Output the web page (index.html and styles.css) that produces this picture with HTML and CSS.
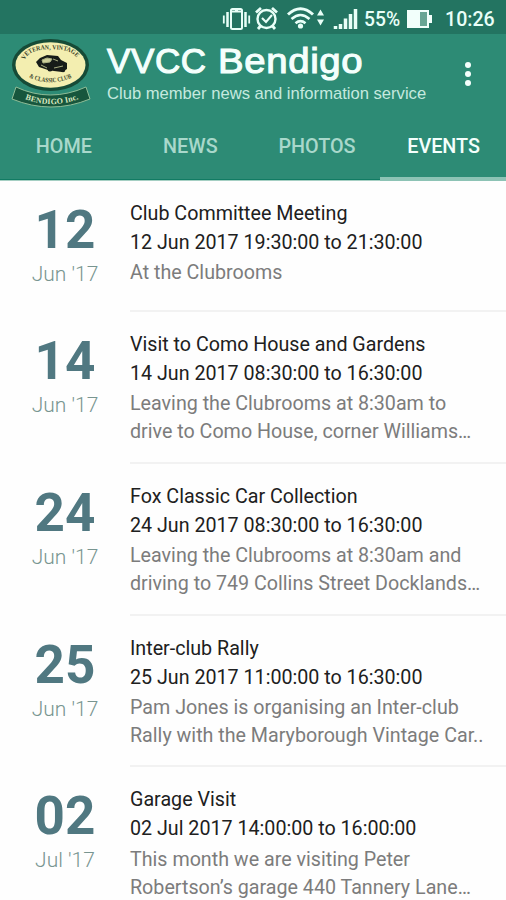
FILE: index.html
```html
<!DOCTYPE html>
<html lang="en">
<head>
<meta charset="utf-8">
<title>VVCC Bendigo</title>
<link rel="stylesheet" href="styles.css">
</head>
<body>
<header class="app-header">
  <div class="status-bar">
    <svg class="status-icons" width="144" height="34" viewBox="215 0 144 34" fill="none" stroke="#e9fff8">
      <rect x="231" y="9" width="11" height="20" rx="1.5" stroke-width="2"/>
      <path d="M232 11.5h9M235 10h3" stroke-width="2"/>
      <path d="M227.500 12v15M245.500 12v15" stroke-width="2.500"/>
      <path d="M223.800 15.500v8M249.200 15.500v8" stroke-width="1.800"/>
      <circle cx="266.500" cy="19" r="9" stroke-width="2.400"/>
      <path d="M256 12.500l5-4.500M277 12.500l-5-4.500M260.500 26l-2.500 3M272.500 26l2.500 3" stroke-width="2.800"/>
      <path d="M262 18l4 4 6-7" stroke-width="2.100"/>
      <path d="M288 14.500q12.500-11.500 25 0" stroke-width="3"/>
      <path d="M291.500 19q9-8 18 0M295.500 23.200q5-4.200 10 0" stroke-width="2.600"/>
      <circle cx="300.500" cy="26" r="2.600" fill="#e9fff8" stroke="none"/>
      <path d="M317 15.500l3.500-6 3.500 6zM317 19.500l3.500 6 3.500-6z" fill="#e9fff8" stroke="none"/>
      <path d="M335.500 29v-3M340.500 29v-5" stroke-width="3.500"/>
      <path d="M345.500 29V18.500M350.500 29V14M355.500 29V9" stroke-width="3.500"/>
    </svg>
    <span class="battery-level">55%</span>
    <svg class="battery" width="28" height="18" viewBox="0 0 28 18">
      <path d="M1 0h22v5h3v8h-3v5H1z" fill="#f2fffb"/>
      <path d="M14 2h7v14h-7z" fill="#68a594"/>
    </svg>
    <span class="clock">10:26</span>
  </div>
  <div class="title-bar">
    <svg class="logo" width="84" height="70" viewBox="9 38 84 70">
      <path d="M16 87Q50 103 86 87L90 99Q51 115 12 99z" fill="#17563d" stroke="#8fbd97" stroke-width="1"/>
      <ellipse cx="50.500" cy="65" rx="38.500" ry="26" fill="#164b37"/>
      <ellipse cx="50.500" cy="65" rx="35" ry="22.800" fill="#f3eeb0"/>
      <path id="arc-top" d="M24.500 60Q30 48.500 51 49.500Q72 48.500 78 60" fill="none"/>
      <path id="arc-mid" d="M29 77.500Q50 87 72 77.500" fill="none"/>
      <path id="arc-base" d="M25 99Q51 109.500 80 98.500" fill="none"/>
      <text class="logo-dark"><textPath href="#arc-top" textLength="58" lengthAdjust="spacingAndGlyphs">VETERAN, VINTAGE</textPath></text>
      <text class="logo-dark"><textPath href="#arc-mid" textLength="44" lengthAdjust="spacingAndGlyphs">&amp; CLASSIC CLUB</textPath></text>
      <text class="logo-light"><textPath href="#arc-base" textLength="55">BENDIGO Inc.</textPath></text>
      <path d="M36 62l4-4 7-3 11 1 3 4 6 3v6l-5 3-8-1-6-1-9-3z" fill="#171c18"/>
      <path d="M42 60l5-2 5 1-2 3-7 1zM53 59l5 2M54 68l9-2M41 65l6 3" fill="#cdcf9b" stroke="#aab083" stroke-width="1"/>
      <circle cx="50" cy="69" r="2.500" fill="#171c18"/><circle cx="63" cy="70" r="2.300" fill="#171c18"/>
    </svg>
    <div class="brand">
      <div class="brand-name">VVCC <span class="brand-town">Bendigo</span></div>
      <div class="brand-tagline">Club member news and information service</div>
    </div>
    <div class="menu"><i></i><i></i><i></i></div>
  </div>
  <nav class="tabs">
    <a class="tab">HOME</a><a class="tab">NEWS</a><a class="tab">PHOTOS</a><a class="tab tab-active">EVENTS</a>
  </nav>
</header>
<main>
  <article class="event event-short">
    <div class="date"><div class="day">12</div><div class="month">Jun '17</div></div>
    <div class="details"><div class="name">Club Committee Meeting</div><div class="time">12 Jun 2017 19:30:00 to 21:30:00</div><div class="desc">At the Clubrooms</div></div>
  </article>
  <article class="event">
    <div class="date"><div class="day">14</div><div class="month">Jun '17</div></div>
    <div class="details"><div class="name">Visit to Como House and Gardens</div><div class="time">14 Jun 2017 08:30:00 to 16:30:00</div><div class="desc">Leaving the Clubrooms at 8:30am to<br>drive to Como House, corner Williams…</div></div>
  </article>
  <article class="event">
    <div class="date"><div class="day">24</div><div class="month">Jun '17</div></div>
    <div class="details"><div class="name">Fox Classic Car Collection</div><div class="time">24 Jun 2017 08:30:00 to 16:30:00</div><div class="desc">Leaving the Clubrooms at 8:30am and<br>driving to 749 Collins Street Docklands…</div></div>
  </article>
  <article class="event">
    <div class="date"><div class="day">25</div><div class="month">Jun '17</div></div>
    <div class="details"><div class="name">Inter-club Rally</div><div class="time">25 Jun 2017 11:00:00 to 16:30:00</div><div class="desc">Pam Jones is organising an Inter-club<br>Rally with the Maryborough Vintage Car..</div></div>
  </article>
  <article class="event">
    <div class="date"><div class="day">02</div><div class="month">Jul '17</div></div>
    <div class="details"><div class="name">Garage Visit</div><div class="time">02 Jul 2017 14:00:00 to 16:00:00</div><div class="desc">This month we are visiting Peter<br>Robertson’s garage 440 Tannery Lane…</div></div>
  </article>
</main>
</body>
</html>
```
FILE: styles.css
```css
* { box-sizing: border-box; }
body {
  margin: 0;
  height: 900px;
  overflow: hidden;
  background: #fefefe;
  font-family: Roboto, "Liberation Sans", sans-serif;
}
.app-header { height: 181px; background: #2d8b75; border-bottom: 1px solid #a5cfc3; }
.status-bar {
  display: flex;
  align-items: center;
  height: 34px;
  padding: 4px 0 0 215px;
  background: #237461;
  color: #e9fff8;
  font-size: 19.3px;
  font-weight: 500;
  white-space: nowrap;
}
.status-icons { flex: none; margin-top: -4px; }
.battery-level { width: 47px; padding-left: 5px; }
.battery { flex: none; }
.clock { margin-left: 11px; font-size: 19.6px; }
.title-bar { display: flex; height: 76px; padding: 4px 35px 0 9px; }
.logo { flex: none; }
.logo-dark, .logo-light { font-family: "Liberation Serif", serif; font-weight: 700; }
.logo-dark { font-size: 6.5px; fill: #394329; }
.logo-light { font-size: 8px; fill: #dcebc2; }
.brand {
  flex: 1;
  padding-left: 14px;
  font-family: "Liberation Sans", sans-serif;
  white-space: nowrap;
  color: #f4fffc;
}
.brand-name { font-size: 35px; line-height: 46px; letter-spacing: 0.6px; -webkit-text-stroke: 1.1px #f4fffc; }
.brand-town { display: inline-block; margin-left: 1px; transform: scaleX(1.095); transform-origin: left; }
.brand-tagline { font-size: 16.6px; line-height: 19px; color: #c5e9df; }
.menu { display: flex; flex-direction: column; gap: 3px; padding-top: 24px; }
.menu i { width: 6px; height: 6px; border-radius: 50%; background: #f4fffc; }
.tabs { display: grid; grid-template-columns: repeat(4, 126.6px); height: 70px; }
.tab {
  height: 70px;
  padding-left: 1px;
  border-bottom: 1px solid #117b63;
  color: #a9d8cb;
  font-size: 19.8px;
  font-weight: 500;
  line-height: 73px;
  text-align: center;
}
.tab-active { height: 71px; color: #f4fffc; border-bottom: 4px solid #8dc3b5; }
.event { display: flex; height: 151.8px; }
.event-short { height: 131px; }
.date { width: 130px; padding-top: 20px; text-align: center; }
.day { font-size: 53px; font-weight: 700; line-height: 58px; color: #507881; }
.month { font-size: 21px; font-weight: 300; line-height: 31px; color: #789590; }
.details {
  flex: 1;
  padding-top: 18px;
  border-bottom: 2px solid #f2f2f2;
  font-size: 19.68px;
  white-space: nowrap;
  color: #202020;
}
.name { line-height: 29px; }
.time { line-height: 30px; }
.desc { padding-top: 1.2px; line-height: 28px; color: #7c7c7c; }
```
